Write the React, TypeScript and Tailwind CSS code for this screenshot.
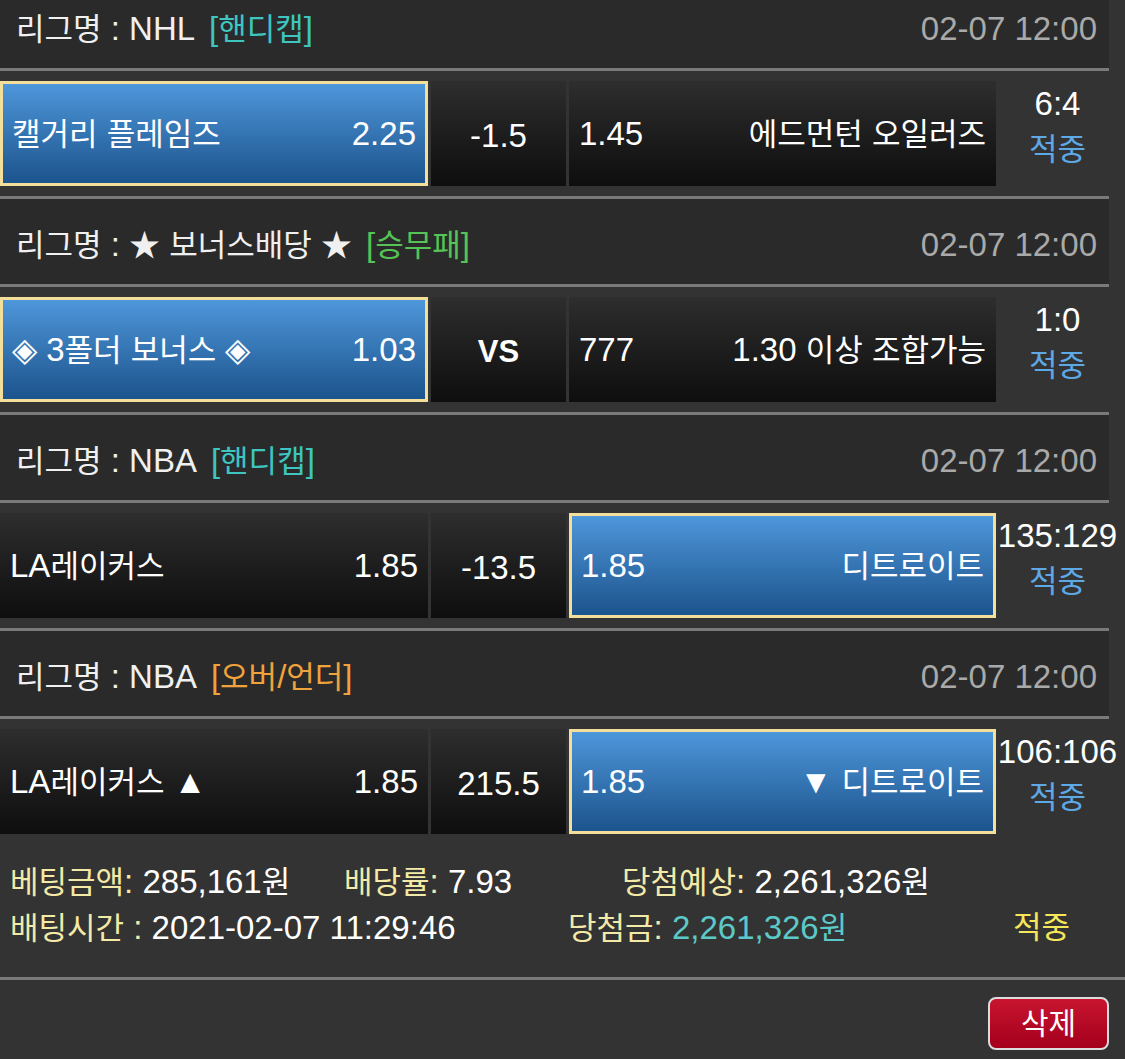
import React from 'react';

type Match = {
  league: string;
  tag: string;
  tagColor: string;
  home: string;
  homeOdds: string;
  mid: string;
  midBold?: boolean;
  awayOdds: string;
  away: string;
  score: string;
  pick: 'home' | 'away';
};

const matches: Match[] = [
  { league: 'NHL', tag: '[핸디캡]', tagColor: 'text-[#3ec5c0]', home: '캘거리 플레임즈', homeOdds: '2.25', mid: '-1.5', awayOdds: '1.45', away: '에드먼턴 오일러즈', score: '6:4', pick: 'home' },
  { league: '★ 보너스배당 ★', tag: '[승무패]', tagColor: 'text-[#55c355]', home: '◈ 3폴더 보너스 ◈', homeOdds: '1.03', mid: 'VS', midBold: true, awayOdds: '777', away: '1.30 이상 조합가능', score: '1:0', pick: 'home' },
  { league: 'NBA', tag: '[핸디캡]', tagColor: 'text-[#3ec5c0]', home: 'LA레이커스', homeOdds: '1.85', mid: '-13.5', awayOdds: '1.85', away: '디트로이트', score: '135:129', pick: 'away' },
  { league: 'NBA', tag: '[오버/언더]', tagColor: 'text-[#f0a23c]', home: 'LA레이커스 ▲', homeOdds: '1.85', mid: '215.5', awayOdds: '1.85', away: '▼ 디트로이트', score: '106:106', pick: 'away' },
];

// hangul runs a bit smaller than latin, like the original phone fonts
function T({ s }: { s: string }) {
  const parts = s.split(/([가-힣★]+)/);
  return (
    <>
      {parts.map((p, i) =>
        /[가-힣★]/.test(p) ? (
          <span key={i} className="text-[31px]">{p}</span>
        ) : (
          <React.Fragment key={i}>{p}</React.Fragment>
        )
      )}
    </>
  );
}

const picked = 'bg-gradient-to-b from-[#4e97da] to-[#1c548d] border-[3px] border-[#f3de9a] px-[9px]';
const plain = 'bg-gradient-to-b from-[#2e2e2e] to-[#0e0e0e] px-[10px]';

function MatchBlock({ m, last }: { m: Match; last: boolean }) {
  return (
    <div>
      <div className="h-[85px] bg-[#2a2a2a] flex items-center justify-between pl-[16px] pr-[12px] pt-[6px]">
        <div className="flex items-center whitespace-pre">
          <span className="text-[#f0f0f0]"><T s={`리그명 : ${m.league}`} /></span>
          <span className={`ml-[14px] ${m.tagColor}`}><T s={m.tag} /></span>
        </div>
        <span className="text-[#a9a9a9]">02-07 12:00</span>
      </div>
      <div className="h-[3px] bg-[#7a7a7a]" />
      <div className="py-[10px] flex items-stretch">
        <div className={`w-[428px] h-[105px] flex items-center justify-between text-white ${m.pick === 'home' ? picked : plain}`}>
          <span className="whitespace-pre"><T s={m.home} /></span>
          <span>{m.homeOdds}</span>
        </div>
        <div className={`ml-[3px] w-[135px] h-[105px] flex items-center justify-center pt-[4px] text-white bg-gradient-to-b from-[#2e2e2e] to-[#0e0e0e] ${m.midBold ? 'font-bold text-[31px]' : ''}`}>
          {m.mid}
        </div>
        <div className={`ml-[3px] w-[427px] h-[105px] flex items-center justify-between text-white ${m.pick === 'away' ? picked : plain}`}>
          <span>{m.awayOdds}</span>
          <span className="whitespace-pre"><T s={m.away} /></span>
        </div>
        <div className="w-[113px] pl-[10px] flex flex-col items-center justify-center -mt-[14px] leading-[46px]">
          <span className="text-white whitespace-nowrap">{m.score}</span>
          <span className="text-[#5ea8e6] text-[31px]">적중</span>
        </div>
      </div>
      {!last && <div className="h-[3px] bg-[#7a7a7a]" />}
    </div>
  );
}

export default function App() {
  return (
    <div className="w-[1125px] h-[1059px] overflow-hidden bg-[#333333] text-[33px] leading-none font-['Liberation_Sans','Noto_Sans_CJK_KR',sans-serif]">
      <div className="w-[1109px] -mt-[17px]">
        {matches.map((m, i) => (
          <MatchBlock key={i} m={m} last={i === matches.length - 1} />
        ))}
      </div>

      <div className="pt-[15px] pb-[26px] pl-[10px] leading-[45px]">
        <div className="flex whitespace-pre">
          <div className="w-[334px]">
            <span className="text-[#f3eaa8]"><T s="베팅금액: " /></span>
            <span className="text-white"><T s="285,161원" /></span>
          </div>
          <div className="w-[278px]">
            <span className="text-[#f3eaa8]"><T s="배당률: " /></span>
            <span className="text-white">7.93</span>
          </div>
          <div>
            <span className="text-[#f3eaa8]"><T s="당첨예상: " /></span>
            <span className="text-white"><T s="2,261,326원" /></span>
          </div>
        </div>
        <div className="flex whitespace-pre">
          <div className="w-[558px]">
            <span className="text-[#f3eaa8]"><T s="배팅시간 : " /></span>
            <span className="text-white">2021-02-07 11:29:46</span>
          </div>
          <div className="w-[445px]">
            <span className="text-[#f3eaa8]"><T s="당첨금: " /></span>
            <span className="text-[#5cc9c9]"><T s="2,261,326원" /></span>
          </div>
          <span className="text-[#f5e65a] text-[31px]">적중</span>
        </div>
      </div>

      <div className="h-[3px] bg-[#7a7a7a]" />

      <div className="flex justify-end pt-[17px] pr-[16px]">
        <button className="w-[121px] h-[53px] rounded-[8px] border-2 border-[#dcdcdc] bg-gradient-to-b from-[#c8142f] to-[#a4001c] text-white text-[30px]">
          삭제
        </button>
      </div>
    </div>
  );
}
